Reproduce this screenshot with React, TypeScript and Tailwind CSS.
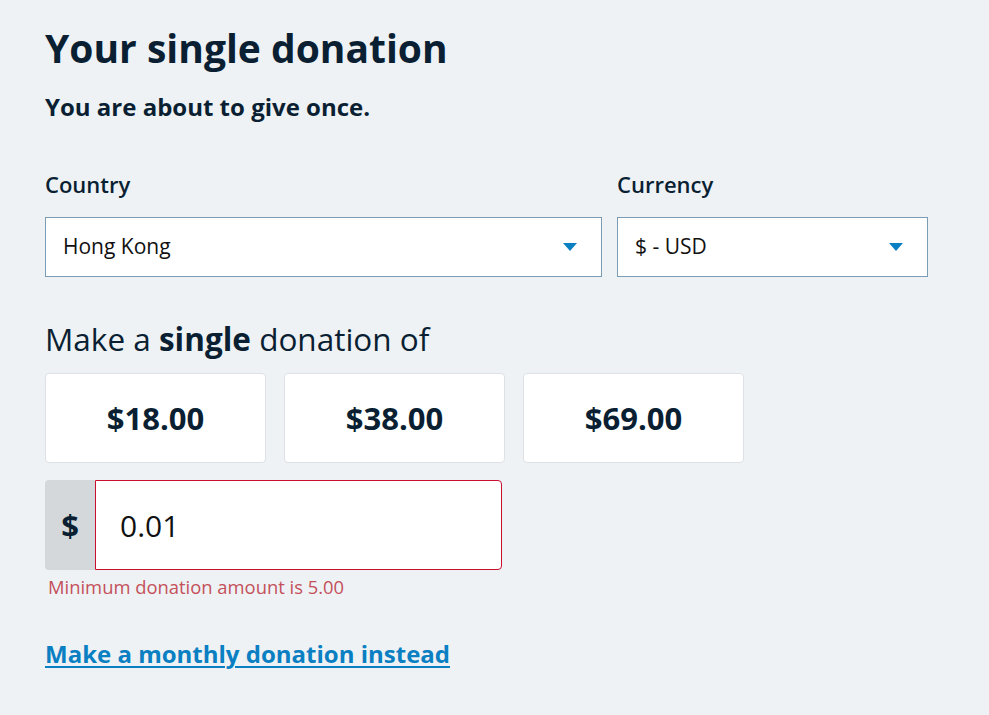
import React, { useState } from 'react';

const amounts = ['$18.00', '$38.00', '$69.00'];

const Caret = () => (
  <svg width="14" height="8" viewBox="0 0 14 8" className="shrink-0">
    <path d="M0 0h14L7 8z" fill="#0a7fc2" />
  </svg>
);

const Select = ({ value, className }: { value: string; className: string }) => (
  <div
    className={`h-[60px] bg-white border border-[#7a9db5] flex items-center justify-between pl-[17px] pr-[24px] text-[21px] text-[#111] ${className}`}
  >
    <span>{value}</span>
    <Caret />
  </div>
);

export default function App() {
  const [amount, setAmount] = useState('0.01');

  return (
    <div
      className="min-h-[715px] bg-[#eef2f5] text-[#0b1f33] pl-[45px] pt-[21px]"
      style={{ fontFamily: '"Open Sans", "Noto Sans", sans-serif' }}
    >
      <h1 className="text-[39px] font-bold leading-[53px]">Your single donation</h1>
      <p className="mt-[16px] text-[24px] font-bold leading-[33px]">You are about to give once.</p>

      <div className="mt-[46px] flex gap-[15px]">
        <div className="w-[557px]">
          <label className="block text-[22px] font-semibold leading-[30px]">Country</label>
          <Select value="Hong Kong" className="mt-[18px]" />
        </div>
        <div className="w-[311px]">
          <label className="block text-[22px] font-semibold leading-[30px]">Currency</label>
          <Select value="$ - USD" className="mt-[18px]" />
        </div>
      </div>

      <h2 className="mt-[41px] text-[31.5px] leading-[42px] font-normal">
        Make a <span className="font-bold">single</span> donation of
      </h2>

      <div className="mt-[13px] flex gap-[18px]">
        {amounts.map((a) => (
          <button
            key={a}
            className="w-[221px] h-[90px] bg-white border border-[#dde1e5] rounded-[4px] text-[31px] font-bold text-[#0b1f33]"
          >
            {a}
          </button>
        ))}
      </div>

      <div className="mt-[17px] flex w-[457px] h-[90px]">
        <div className="w-[50px] bg-[#d4d8db] rounded-l-[4px] flex items-center justify-center text-[31px] font-bold">
          $
        </div>
        <input
          value={amount}
          onChange={(e) => setAmount(e.target.value)}
          className="flex-1 min-w-0 bg-white border border-[#c8102e] rounded-r-[4px] pl-[24px] text-[30px] text-[#111] outline-none"
        />
      </div>
      <p className="mt-[4px] pl-[3px] text-[18.4px] leading-[25px] text-[#c4505a]">
        Minimum donation amount is 5.00
      </p>

      <a
        href="#"
        className="mt-[38px] inline-block text-[24px] font-bold leading-[33px] text-[#0a7fc2] underline decoration-2 underline-offset-[3px]"
      >
        Make a monthly donation instead
      </a>
    </div>
  );
}
